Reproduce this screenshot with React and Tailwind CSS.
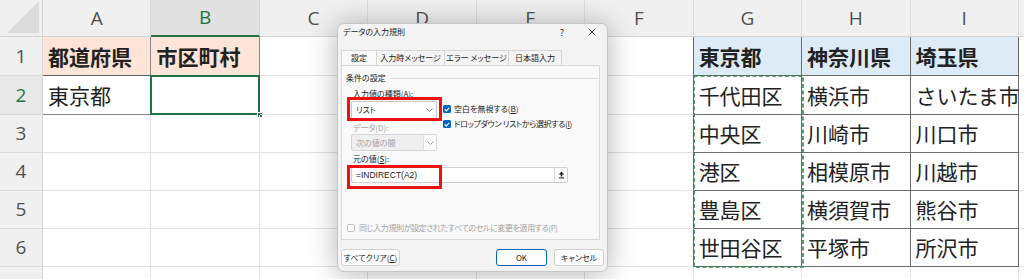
import React from 'react';

const COLS = ['A', 'B', 'C', 'D', 'E', 'F', 'G', 'H', 'I', 'J'];
const ROWS = [1, 2, 3, 4, 5, 6, 7];

const VALUES = {
  1: { A: '都道府県', B: '市区町村', G: '東京都', H: '神奈川県', I: '埼玉県' },
  2: { A: '東京都', G: '千代田区', H: '横浜市', I: 'さいたま市' },
  3: { G: '中央区', H: '川崎市', I: '川口市' },
  4: { G: '港区', H: '相模原市', I: '川越市' },
  5: { G: '豊島区', H: '横須賀市', I: '熊谷市' },
  6: { G: '世田谷区', H: '平塚市', I: '所沢市' },
};

function cellClass(r, c) {
  const inTable = r <= 6 && (c === 'G' || c === 'H' || c === 'I');
  const inLeft = r <= 2 && (c === 'A' || c === 'B');
  let border = 'border-r-[#e1e1e1] border-b-[#e1e1e1]';
  if (inTable) border = 'border-r-[#6b6b6b] border-b-[#6b6b6b]';
  else if (inLeft && r === 1) border = 'border-r-[#8a8a8a] border-b-[#5f5f5f]';
  else if (inLeft) border = 'border-r-[#8a8a8a] border-b-[#8a8a8a]';
  else if (c === 'F' && r <= 6) border = 'border-r-[#6b6b6b] border-b-[#e1e1e1]';
  let fill = 'font-normal';
  if (r === 1 && inLeft) fill = 'bg-[#fce4d6] font-bold';
  if (r === 1 && inTable) fill = 'bg-[#ddebf7] font-bold';
  return `${border} ${fill}`;
}

function Chevron({ color = '#5f5f5f' }) {
  return (
    <svg width="7" height="4" viewBox="0 0 7 4">
      <path d="M0.5 0.5 L3.5 3.5 L6.5 0.5" fill="none" stroke={color} strokeWidth="0.8" />
    </svg>
  );
}

function Check({ checked }) {
  if (checked) {
    return (
      <span className="w-[8px] h-[8px] shrink-0 rounded-[1.5px] bg-[#0067c0] flex items-center justify-center">
        <svg width="6" height="5" viewBox="0 0 6 5">
          <path d="M0.7 2.5 L2.3 4 L5.3 0.9" fill="none" stroke="white" strokeWidth="1.1" />
        </svg>
      </span>
    );
  }
  return <span className="w-[8px] h-[8px] shrink-0 rounded-[1.5px] border border-[#c2c2c2] bg-[#fbfbfb]" />;
}

function Dialog() {
  return (
    <div className="absolute left-[337px] top-[23px] w-[271px] h-[249px] rounded-[7px] border border-[#c6c6c6] bg-[#f3f3f3] shadow-[0_2px_28px_rgba(0,0,0,0.3)] flex flex-col text-[8px] leading-none text-[#1b1b1b] font-['Noto_Sans_CJK_JP',sans-serif] [font-feature-settings:'palt']">
      {/* title bar */}
      <div className="h-[16px] flex items-center pl-[5px]">
        <span>データの入力規則</span>
        <div className="ml-auto flex h-full">
          <span className="w-[30px] flex items-center justify-center text-[9px]">?</span>
          <span className="w-[30px] flex items-center justify-center">
            <svg width="8" height="8" viewBox="0 0 8 8">
              <path d="M0.5 0.5 L7.5 7.5 M7.5 0.5 L0.5 7.5" stroke="#333" strokeWidth="0.9" />
            </svg>
          </span>
        </div>
      </div>

      {/* tabs */}
      <div className="mt-[10px] ml-[3px] flex h-[15px]">
        <div className="w-[36px] border border-b-0 border-[#d6d6d6] bg-[#f9f9f9] flex items-center justify-center">設定</div>
        <div className="w-[68px] border border-l-0 border-b-0 border-[#d6d6d6] flex items-center justify-center">入力時メッセージ</div>
        <div className="w-[64px] border border-l-0 border-b-0 border-[#d6d6d6] flex items-center justify-center">エラー メッセージ</div>
        <div className="w-[53px] border border-l-0 border-b-0 border-[#d6d6d6] flex items-center justify-center">日本語入力</div>
      </div>

      {/* panel */}
      <div className="relative ml-[3px] w-[259px] h-[175px] border border-[#d9d9d9] bg-[#f9f9f9] flex flex-col">
        <div className="mt-[7px] h-[10px] flex items-center pl-[4px] pr-[1px]">
          <span>条件の設定</span>
          <span className="ml-[4px] flex-1 h-px bg-[#dedede]" />
        </div>

        <div className="flex">
          <div className="w-[101px] pl-[9px] flex flex-col">
            <div className="mt-[6px] h-[10px] flex items-center pl-[2px]">入力値の種類(A):</div>
            <div className="mt-[2px] h-[18px] w-[86px] bg-white border border-[#c9c9c9] rounded-[2px] flex items-center">
              <span className="pl-[4px]">リスト</span>
              <span className="ml-auto w-[13px] h-full flex items-center justify-center"><Chevron /></span>
            </div>
            <div className="mt-[4px] h-[10px] flex items-center pl-[2px] text-[#a3a3a3]">データ(D):</div>
            <div className="mt-[1px] h-[17px] w-[86px] bg-[#efefef] border border-[#d6d6d6] rounded-[2px] flex items-center">
              <span className="pl-[4px] text-[#a3a3a3]">次の値の間</span>
              <span className="ml-auto w-[13px] h-full bg-[#fbfbfb] border-l border-[#dddddd] flex items-center justify-center"><Chevron color="#8a8a8a" /></span>
            </div>
          </div>
          <div className="flex flex-col">
            <div className="mt-[21px] h-[10px] flex items-center gap-[3px]">
              <Check checked />
              <span>空白を無視する(<span className="underline">B</span>)</span>
            </div>
            <div className="mt-[5px] h-[10px] flex items-center gap-[3px]">
              <Check checked />
              <span className="whitespace-nowrap tracking-[-0.3px]">ドロップダウン リストから選択する(<span className="underline">I</span>)</span>
            </div>
          </div>
        </div>

        <div className="mt-[3px] h-[10px] flex items-center pl-[11px]">元の値(<span className="underline">S</span>):</div>
        <div className="mt-[3px] ml-[9px] w-[217px] h-[16px] bg-white border border-[#cfcfcf] rounded-[2px] flex items-center">
          <span className="pl-[4px] text-[8.5px] font-['Liberation_Sans',sans-serif]">=INDIRECT(A2)</span>
          <span className="ml-auto w-[13px] h-full border-l border-[#dcdcdc] bg-[#fbfbfb] flex items-center justify-center">
            <svg width="7" height="8" viewBox="0 0 7 8">
              <path d="M3.5 0.6 L6.2 3.4 L4.3 3.4 L4.3 5.4 L2.7 5.4 L2.7 3.4 L0.8 3.4 Z" fill="#222" />
              <rect x="0.8" y="6.4" width="5.4" height="1" fill="#222" />
            </svg>
          </span>
        </div>

        <div className="mt-[40px] h-[10px] flex items-center gap-[4px] pl-[5px] text-[#a3a3a3]">
          <Check />
          <span className="whitespace-nowrap tracking-[-0.4px]">同じ入力規則が設定されたすべてのセルに変更を適用する(P)</span>
        </div>

        {/* red annotation boxes */}
        <div className="absolute left-[5px] top-[31px] w-[95px] h-[24px] border-[3px] border-[#ee1111]" />
        <div className="absolute left-[5px] top-[99px] w-[95px] h-[24px] border-[3px] border-[#ee1111]" />
      </div>

      {/* buttons */}
      <div className="mt-[9px] flex px-[3px]">
        <div className="w-[59px] h-[17px] rounded-[3px] border border-[#d0d0d0] bg-[#fdfdfd] flex items-center justify-center">
          すべてクリア(<span className="underline">C</span>)
        </div>
        <div className="ml-auto w-[51px] h-[17px] rounded-[3px] border border-[#0067c0] bg-[#fdfdfd] flex items-center justify-center">OK</div>
        <div className="ml-[7px] w-[50px] h-[17px] rounded-[3px] border border-[#d0d0d0] bg-[#fdfdfd] flex items-center justify-center">キャンセル</div>
      </div>
    </div>
  );
}

export default function App() {
  return (
    <div className="relative w-[1024px] h-[279px] overflow-hidden bg-white">
      <div className="grid w-max grid-cols-[43px_repeat(10,108.44px)] grid-rows-[37px_39px_39px_38px_38px_38px_38px_38px]">
        {/* corner */}
        <div className="bg-[#f0f0f0] border-r border-b border-[#d4d4d4] flex items-end justify-end">
          <svg width="36" height="36" viewBox="0 0 36 36" className="mb-[1px] mr-[1px]">
            <polygon points="34,2 34,34 2,34" fill="#dbdbdb" />
          </svg>
        </div>
        {COLS.map((c) => (
          <div
            key={c}
            className={
              c === 'B'
                ? 'bg-[#e1e1e1] border-r border-r-[#d4d4d4] border-b-2 border-b-[#217346] flex items-center justify-center text-[19px] text-[#217346] font-["Open_Sans",sans-serif]'
                : 'bg-[#f0f0f0] border-r border-r-[#dcdcdc] border-b border-b-[#d4d4d4] flex items-center justify-center text-[19px] text-[#505050] font-["Open_Sans",sans-serif]'
            }
          >
            {c === 'J' ? '' : c}
          </div>
        ))}

        {ROWS.map((r) => (
          <React.Fragment key={r}>
            <div
              className={
                r === 2
                  ? 'bg-[#e8e8e8] border-r border-r-[#d4d4d4] border-b border-b-[#dcdcdc] flex items-center justify-center text-[19px] text-[#217346] font-["Open_Sans",sans-serif]'
                  : 'bg-[#f0f0f0] border-r border-r-[#d4d4d4] border-b border-b-[#dcdcdc] flex items-center justify-center text-[19px] text-[#505050] font-["Open_Sans",sans-serif]'
              }
            >
              {r}
            </div>
            {COLS.map((c) => (
              <div
                key={c}
                className={`relative border-r border-b ${cellClass(r, c)} flex items-center pl-[5px] whitespace-nowrap text-[21px] leading-none text-[#222] font-['Noto_Sans_CJK_JP',sans-serif]`}
              >
                {VALUES[r] && VALUES[r][c]}
                {r === 2 && c === 'B' && (
                  <>
                    <div className="absolute left-[-1px] top-[-1px] right-[-1px] bottom-[-1px] border-2 border-[#217346]" />
                    <div className="absolute right-[-4px] bottom-[-4px] w-[6px] h-[6px] bg-[#217346] border border-white" />
                  </>
                )}
              </div>
            ))}
          </React.Fragment>
        ))}
      </div>

      {/* copy marquee around G2:G6 */}
      <svg className="absolute left-[693px] top-[75px]" width="111" height="193" viewBox="0 0 111 193">
        <rect x="1" y="1" width="109" height="191" fill="none" stroke="#2f8552" strokeWidth="1.6" strokeDasharray="4 2.5" />
      </svg>

      <Dialog />
    </div>
  );
}
